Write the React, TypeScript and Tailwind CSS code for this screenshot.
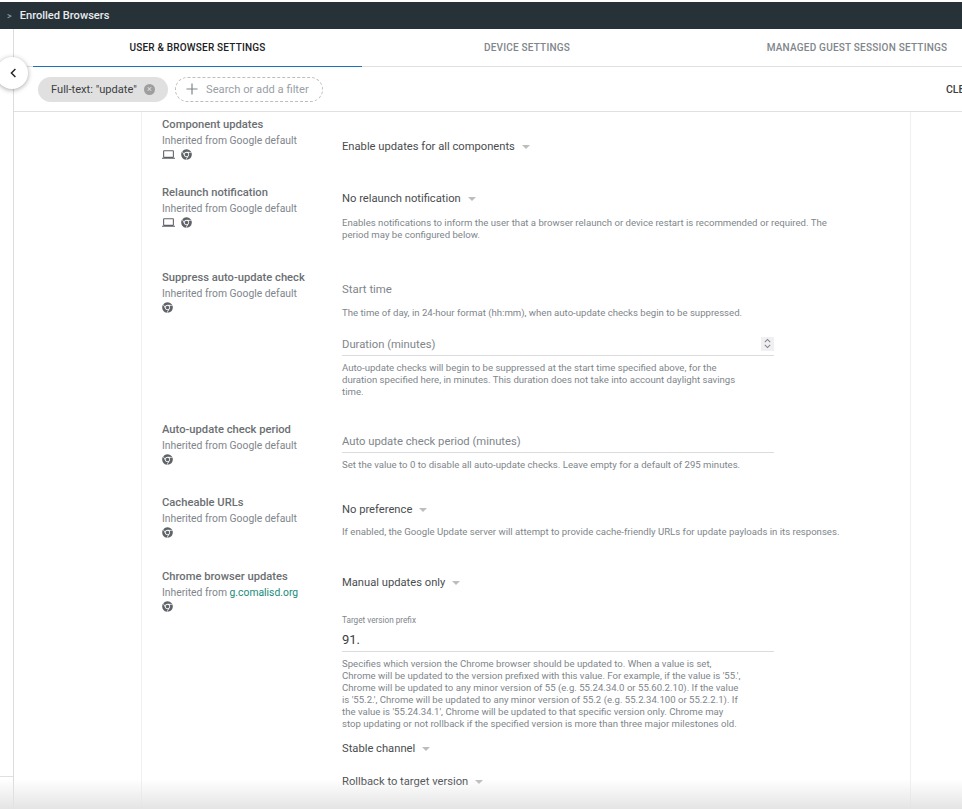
import { FaChrome } from 'react-icons/fa'

function Laptop() {
  return (
    <svg viewBox="0 0 24 24" className="h-[13px] w-[13px] fill-[#5f6368]">
      <path d="M20 18c1.1 0 1.99-.9 1.99-2L22 6c0-1.1-.9-2-2-2H4c-1.1 0-2 .9-2 2v10c0 1.1.9 2 2 2H0v2h24v-2h-4zM4 6h16v10H4V6z" />
    </svg>
  )
}

function SettingInfo({ title, from = 'Google default', laptop = false, link = false }: { title: string; from?: string; laptop?: boolean; link?: boolean }) {
  return (
    <div className="w-[180px] shrink-0">
      <div className="h-[16px] text-[11.2px] leading-[16px] font-medium text-[#6b6f73]">{title}</div>
      <div className="h-[16px] text-[10.35px] leading-[16px] text-[#80868b]">
        Inherited from {link ? <span className="text-[#1a8a7d]">{from}</span> : from}
      </div>
      <div className="mt-[-2px] flex h-[14px] items-center gap-[6px]">
        {laptop && <Laptop />}
        <FaChrome className="h-[11px] w-[11px] text-[#5f6368]" />
      </div>
    </div>
  )
}

function Dropdown({ label, className = '' }: { label: string; className?: string }) {
  return (
    <div className={`flex h-[16px] items-center gap-[7px] text-[11.2px] leading-[16px] text-[#4a4d50] ${className}`}>
      {label}
      <span className="h-0 w-0 border-x-[4px] border-t-[4px] border-x-transparent border-t-[#bdbdbd]" />
    </div>
  )
}

function Help({ children, className = '' }: { children: React.ReactNode; className?: string }) {
  return <div className={`text-[9.6px] leading-[12px] text-[#80868b] ${className}`}>{children}</div>
}

function Field({ placeholder, stepper = false, className = '' }: { placeholder: string; stepper?: boolean; className?: string }) {
  return (
    <div className={`flex h-[24px] w-[432px] items-center justify-between border-b border-[#dadce0] pt-[3px] text-[11.25px] text-[#80868b] ${className}`}>
      {placeholder}
      {stepper && (
        <span className="mb-[3px] flex h-[14px] w-[13px] items-center justify-center bg-[#f0f0f2]">
          <svg viewBox="0 0 10 12" className="h-[11px] w-[9px] fill-none stroke-[#80868b] stroke-[1.2]">
            <path d="M2 4.5 5 1.5 8 4.5M2 7.5 5 10.5 8 7.5" />
          </svg>
        </span>
      )}
    </div>
  )
}

export default function App() {
  return (
    <div className="relative h-[809px] w-[962px] overflow-hidden bg-white font-['Roboto',sans-serif]">
      <div className="mt-[2px] flex h-[27px] items-center bg-[#263238] pt-[2px] pl-[7px] text-[11.1px] font-medium text-[#e8eaed]">
        <span className="mr-[8px] text-[9px] text-[#90a4ae]">&gt;</span>
        Enrolled Browsers
      </div>

      <div className="flex h-[780px]">
        <div className="flex w-[14px] shrink-0 flex-col justify-end border-r border-[#dadce0]">
          <div className="mb-[32px] border-t border-[#e0e0e0]" />
        </div>

        <div className="min-w-0 flex-1">
          <div className="flex h-[38px] border-b border-[#e0e0e0] pl-[19px]">
            <div className="flex h-[38px] w-[329px] shrink-0 items-center justify-center border-b border-[#1a73b8] text-[10px] font-medium tracking-[0.2px] text-[#202124]">
              USER &amp; BROWSER SETTINGS
            </div>
            <div className="flex w-[330px] shrink-0 items-center justify-center text-[10px] font-medium tracking-[0.2px] text-[#80868b]">
              DEVICE SETTINGS
            </div>
            <div className="flex w-[330px] shrink-0 items-center justify-center text-[10px] font-medium tracking-[0.22px] whitespace-nowrap text-[#80868b]">
              MANAGED GUEST SESSION SETTINGS
            </div>
          </div>

          <div className="flex h-[45px] items-center overflow-hidden border-b border-[#e0e0e0] pl-[24px]">
            <div className="flex h-[25px] w-[130px] shrink-0 items-center rounded-full bg-[#e0e0e0] pl-[13px] text-[11.1px] whitespace-nowrap text-[#3c4043]">
              <span className="pt-[2px]">Full-text: "update"</span>
              <span className="ml-[7px] flex h-[11px] w-[11px] items-center justify-center rounded-full bg-[#9e9e9e] text-[9px] leading-none text-[#e0e0e0]">×</span>
            </div>
            <div className="ml-[7px] flex h-[25px] w-[148px] shrink-0 items-center rounded-full border border-dashed border-[#bdbdbd] pl-[10px] text-[11.2px] text-[#9aa0a6]">
              <svg viewBox="0 0 12 12" className="mr-[8px] h-[12px] w-[12px] stroke-[#80868b] stroke-[1.2]">
                <path d="M6 0.5v11M0.5 6h11" />
              </svg>
              <span className="pt-[2px]">Search or add a filter</span>
            </div>
            <div className="ml-[623px] shrink-0 pt-[2px] text-[10.5px] font-medium text-[#3c4043]">CLEAR</div>
          </div>

          <div className="ml-[127px] h-[697px] w-[770px] border-x border-[#f0f0f0] pt-[5px] pl-[20px]">
            <div className="flex h-[68px]">
              <SettingInfo title="Component updates" laptop />
              <Dropdown label="Enable updates for all components" className="mt-[22px]" />
            </div>

            <div className="flex h-[85px]">
              <SettingInfo title="Relaunch notification" laptop />
              <div className="w-[490px] pt-[6px]">
                <Dropdown label="No relaunch notification" />
                <Help className="mt-[10px]">
                  Enables notifications to inform the user that a browser relaunch or device restart is recommended or required. The period may be configured below.
                </Help>
              </div>
            </div>

            <div className="flex h-[152px]">
              <SettingInfo title="Suppress auto-update check" />
              <div className="pt-[8px]">
                <div className="flex h-[24px] items-center text-[11.4px] text-[#80868b]">Start time</div>
                <Help className="mt-[5px]">The time of day, in 24-hour format (hh:mm), when auto-update checks begin to be suppressed.</Help>
                <Field placeholder="Duration (minutes)" stepper className="mt-[13px]" />
                <Help className="mt-[6px] w-[410px]">
                  Auto-update checks will begin to be suppressed at the start time specified above, for the duration specified here, in minutes. This duration does not take into account daylight savings time.
                </Help>
              </div>
            </div>

            <div className="flex h-[73px]">
              <SettingInfo title="Auto-update check period" />
              <div className="pt-[7px]">
                <Field placeholder="Auto update check period (minutes)" />
                <Help className="mt-[6px]">Set the value to 0 to disable all auto-update checks. Leave empty for a default of 295 minutes.</Help>
              </div>
            </div>

            <div className="flex h-[74px]">
              <SettingInfo title="Cacheable URLs" />
              <div className="pt-[7px]">
                <Dropdown label="No preference" />
                <Help className="mt-[8px] whitespace-nowrap">If enabled, the Google Update server will attempt to provide cache-friendly URLs for update payloads in its responses.</Help>
              </div>
            </div>

            <div className="flex">
              <SettingInfo title="Chrome browser updates" from="g.comalisd.org" link />
              <div className="pt-[6px]">
                <Dropdown label="Manual updates only" />
                <div className="mt-[23px] text-[8.2px] leading-[12px] text-[#80868b]">Target version prefix</div>
                <div className="mt-[2px] flex h-[24px] w-[432px] items-center border-b border-[#dadce0] text-[13px] text-[#3c4043]">91.</div>
                <Help className="mt-[6px] w-[402px]">
                  Specifies which version the Chrome browser should be updated to. When a value is set, Chrome will be updated to the version prefixed with this value. For example, if the value is '55.', Chrome will be updated to any minor version of 55 (e.g. 55.24.34.0 or 55.60.2.10). If the value is '55.2.', Chrome will be updated to any minor version of 55.2 (e.g. 55.2.34.100 or 55.2.2.1). If the value is '55.24.34.1', Chrome will be updated to that specific version only. Chrome may stop updating or not rollback if the specified version is more than three major milestones old.
                </Help>
                <Dropdown label="Stable channel" className="mt-[11px]" />
                <Dropdown label="Rollback to target version" className="mt-[17px]" />
              </div>
            </div>
          </div>
        </div>
      </div>

      <button className="absolute top-[57px] left-[-4px] flex h-[32px] w-[32px] items-center justify-center rounded-full bg-white shadow-[0_1px_5px_rgba(0,0,0,0.35)]">
        <svg viewBox="0 0 10 12" className="ml-[1px] h-[10px] w-[8px] fill-none stroke-[#202124] stroke-[1.8]">
          <path d="M8 1 3 6l5 5" />
        </svg>
      </button>

      <div className="absolute right-0 bottom-0 left-0 h-[30px] bg-gradient-to-b from-transparent to-[#e4e4e4]" />
    </div>
  )
}
